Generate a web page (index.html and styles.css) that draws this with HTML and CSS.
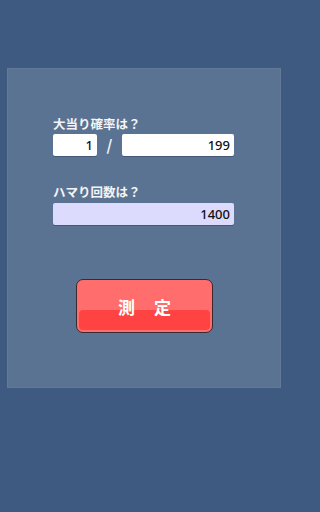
FILE: index.html
```html
<!DOCTYPE html>
<html lang="ja">
<head>
<meta charset="utf-8">
<link rel="stylesheet" href="styles.css">
</head>
<body>
<div class="panel">
  <div class="label first">大当り確率は？</div>
  <div class="row">
    <div class="box small">1</div>
    <div class="slash">/</div>
    <div class="box wide">199</div>
  </div>
  <div class="label second">ハマり回数は？</div>
  <div class="box full">1400</div>
  <div class="btnwrap">
    <div class="btn"><span class="btn-lower"></span><span class="btn-text">測　定</span></div>
  </div>
</div>
</body>
</html>
```

FILE: styles.css
```css
html, body {
  margin: 0;
  padding: 0;
  background: #3e5a81;
}
body {
  width: 288px;
  height: 512px;
  font-family: "Noto Sans CJK JP", "Noto Sans", sans-serif;
  padding-top: 68px;
  box-sizing: border-box;
}
.panel {
  margin-left: 7px;
  width: 274px;
  height: 320px;
  background: #5b7393;
  box-sizing: border-box;
  border: 1px solid #62799a;
  padding: 0 0 0 45px;
  display: flex;
  flex-direction: column;
}
.label {
  color: #f4f4f4;
  font-weight: bold;
  font-size: 12.5px;
  line-height: 16px;
  height: 16px;
}
.label.first {
  margin-top: 47px;
}
.label.second {
  margin-top: 28px;
}
.row {
  display: flex;
  align-items: center;
  margin-top: 2px;
}
.box {
  box-sizing: border-box;
  height: 22px;
  background: #ffffff;
  border-radius: 2px;
  box-shadow: 0 1px 0 #44597a;
  text-align: right;
  font-family: "Noto Sans", "DejaVu Sans", sans-serif;
  font-size: 13px;
  font-weight: 500;
  line-height: 22px;
  padding-right: 4px;
  color: #111;
}
.small {
  width: 44px;
}
.slash {
  width: 25px;
  text-align: center;
  color: #f4f4f4;
  font-weight: bold;
  font-size: 15px;
  line-height: 22px;
}
.wide {
  width: 112px;
}
.full {
  width: 181px;
  margin-top: 3px;
  background: #dcdbfd;
}
.btnwrap {
  margin-top: 54px;
  padding-left: 23px;
}
.btn {
  position: relative;
  box-sizing: border-box;
  width: 137px;
  height: 54px;
  background: #ff6d6d;
  border: 1px solid #3a2a2e;
  border-radius: 7px;
  overflow: hidden;
}
.btn-lower {
  position: absolute;
  left: 2px;
  right: 2px;
  bottom: 2px;
  top: 30px;
  background: #ff4343;
  border-radius: 4px;
}
.btn-text {
  position: absolute;
  left: 0;
  right: 0;
  top: 17px;
  text-align: center;
  color: #ffffff;
  font-weight: bold;
  font-size: 17px;
  line-height: 20px;
  letter-spacing: 1px;
  text-indent: 1px;
}
```
